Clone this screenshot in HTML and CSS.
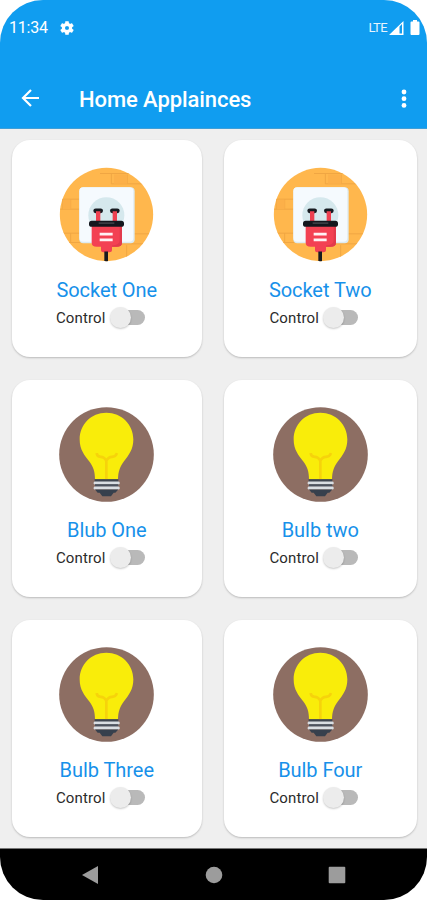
FILE: index.html
```html
<!DOCTYPE html>
<html lang="en">
<head>
<meta charset="utf-8">
<title>Home Applainces</title>
<link rel="stylesheet" href="styles.css">
</head>
<body>
<svg class="defs" aria-hidden="true">
  <symbol id="socket" viewBox="27 19.5 285 285">
    <clipPath id="disc"><circle cx="169.500" cy="162" r="140"/></clipPath>
    <g clip-path="url(#disc)">
      <rect x="20" y="10" width="300" height="300" fill="#ffb74d"/>
      <g fill="none" stroke="#f0a643" stroke-width="3">
        <path d="M184 38v32M232 42v28M150 39h100M184 70h96M30 116h64M38 116v30M62 116v30M30 146h64M62 218v28M30 218h62M50 246h76M230 254v40M250 220h60M210 250h70"/>
      </g>
      <path d="M192 42h40v28h-40zM38 118h24v28h-24z" fill="#fcb049"/>
      <rect x="88" y="80" width="166" height="168" rx="12" fill="#dcebf0"/>
      <rect x="88" y="80" width="162" height="164" rx="12" fill="#f5fafe"/>
      <circle cx="169" cy="164" r="54" fill="#d5e8ed"/>
      <rect x="130" y="144" width="29" height="14" rx="7" fill="#171a20"/>
      <rect x="180" y="144" width="29" height="14" rx="7" fill="#171a20"/>
      <path d="M138 152h13v36h-13zM188 152h13v36h-13z" fill="#ee4050"/>
      <path d="M125 192h91v54q0 13-16 13h-14v10q0 6-8 6h-18q-7 0-7-6v-10h-13q-15 0-15-13z" fill="#f34153"/>
      <path d="M209 194h7v52q0 13-16 13h-14v-4q23-2 23-15z" fill="#e23a4c"/>
      <rect x="117" y="181" width="105" height="18" rx="8" fill="#14171e"/>
      <path d="M146 188h47" stroke="#3b3d43" stroke-width="5"/>
      <path d="M149 221h39M149 238h39" stroke="#fff2f4" stroke-width="8"/>
      <rect x="163" y="273" width="11" height="32" fill="#171a20"/>
    </g>
  </symbol>
  <symbol id="bulb" viewBox="27 19.500 285 285">
    <circle cx="169.500" cy="162" r="142" fill="#8d6e63"/>
    <path d="M169 37C123 37 89 73 89 117c0 31 15 48 29 66 12 16 17 31 17 54h69c0-24 6-39 18-55 14-18 28-35 28-65 0-44-35-80-81-80z" fill="#f9ed0a"/>
    <path d="M169 237v-58M140 158q1 11 12 11 11 0 17 12 6-12 17-12 11 0 15-11" fill="none" stroke="#f6d30b" stroke-width="8"/>
    <path d="M134 236h71v9h-71z" fill="#3f4651"/>
    <rect x="131" y="243" width="78" height="9" rx="4" fill="#d9dee3"/>
    <path d="M135 251h70v8h-70z" fill="#4b535f"/>
    <rect x="131" y="258" width="78" height="9" rx="4" fill="#d9dee3"/>
    <path d="M135 267h70l-9 10h-5l-8 10h-26l-8-10h-6z" fill="#37404d"/>
  </symbol>
</svg>
<div class="phone">
  <header class="header">
    <div class="status">
      <span class="time">11:34</span>
      <svg class="gear" viewBox="2 2 20 20"><path fill="#fff" d="M19.140 12.940c.04-.3.060-.610.060-.940 0-.320-.020-.640-.070-.940l2.030-1.580a.49.49 0 0 0 .12-.610l-1.920-3.320a.488.488 0 0 0-.590-.220l-2.390.960c-.5-.380-1.030-.7-1.620-.940l-.360-2.540a.484.484 0 0 0-.480-.410h-3.840c-.240 0-.430.170-.470.410l-.360 2.540c-.590.240-1.130.570-1.620.940l-2.390-.960c-.220-.080-.470 0-.590.220L2.740 8.870c-.120.210-.080.470.120.610l2.030 1.580c-.050.3-.090.630-.090.940s.020.640.070.940l-2.030 1.580a.49.49 0 0 0-.120.610l1.920 3.320c.120.220.370.290.590.220l2.390-.960c.5.380 1.030.7 1.620.940l.360 2.540c.050.240.240.410.480.410h3.840c.240 0 .440-.170.470-.410l.360-2.540c.590-.240 1.130-.560 1.620-.940l2.390.960c.220.080.470 0 .590-.220l1.920-3.320c.120-.220.070-.470-.120-.610zM12 15a3 3 0 1 1 0-6 3 3 0 0 1 0 6z"/></svg>
      <span class="lte">LTE</span>
      <svg class="signal" viewBox="0 0 15 14"><path fill="#fff" fill-rule="evenodd" d="M14.500 0v14H0zM10.500 5.500V12.500H13V3z"/></svg>
      <svg class="battery" viewBox="0 0 10 15"><path fill="#fff" d="M3 0h4v1.500h1.500q1 0 1 1V14q0 1-1 1h-7q-1 0-1-1V2.500q0-1 1-1H3z"/></svg>
    </div>
    <div class="toolbar">
      <svg class="back" viewBox="0 0 18 18"><path fill="none" stroke="#fff" stroke-width="2.200" d="M17.500 9H1.500M9.500 1L1.500 9l8 8"/></svg>
      <h1>Home Applainces</h1>
      <svg class="more" viewBox="0 0 6 20"><g fill="#fff"><circle cx="3" cy="3" r="2.400"/><circle cx="3" cy="9.700" r="2.400"/><circle cx="3" cy="16.400" r="2.400"/></g></svg>
    </div>
  </header>
  <main class="grid">
    <section class="card"><svg class="pic"><use href="#socket"/></svg><h2>Socket One</h2><div class="control"><span>Control</span><i class="switch"></i></div></section>
    <section class="card"><svg class="pic"><use href="#socket"/></svg><h2>Socket Two</h2><div class="control"><span>Control</span><i class="switch"></i></div></section>
    <section class="card"><svg class="pic"><use href="#bulb"/></svg><h2>Blub One</h2><div class="control"><span>Control</span><i class="switch"></i></div></section>
    <section class="card"><svg class="pic"><use href="#bulb"/></svg><h2>Bulb two</h2><div class="control"><span>Control</span><i class="switch"></i></div></section>
    <section class="card"><svg class="pic"><use href="#bulb"/></svg><h2>Bulb Three</h2><div class="control"><span>Control</span><i class="switch"></i></div></section>
    <section class="card"><svg class="pic"><use href="#bulb"/></svg><h2>Bulb Four</h2><div class="control"><span>Control</span><i class="switch"></i></div></section>
  </main>
  <nav class="nav">
    <svg viewBox="0 0 18 18"><path fill="#9c9c9c" d="M17 0v18L1 9z"/></svg>
    <svg viewBox="0 0 18 18"><circle cx="9" cy="9" r="8.300" fill="#9c9c9c"/></svg>
    <svg viewBox="0 0 18 18"><rect x=".7" y=".7" width="16.600" height="16.600" rx="1" fill="#9c9c9c"/></svg>
  </nav>
</div>
</body>
</html>
```
FILE: styles.css
```css
* { box-sizing: border-box; }
body { margin: 0; background: #fff; font-family: Roboto, sans-serif; }
.defs { position: absolute; width: 0; height: 0; }
.phone {
  width: 427px; height: 900px; display: flex; flex-direction: column;
  overflow: hidden; border-radius: 43px; background: #efefef;
}
.header { height: 129px; background: #109df0; color: #fff; border-bottom: 1px solid #3f9fd8; }
.status { height: 55px; display: flex; align-items: center; padding: 0 7px 0 9px; }
.time { font-size: 16px; width: 51px; letter-spacing: -.2px; }
.gear { width: 14px; height: 14px; stroke: #fff; stroke-width: .2px; }
.lte { font-size: 13px; letter-spacing: -.6px; margin-left: auto; margin-right: 2px; opacity: .9; }
.signal { width: 15px; height: 14px; margin-right: 6px; }
.battery { width: 10px; height: 15px; }
.toolbar { height: 73px; display: flex; align-items: center; padding: 16px 20px 0 21px; }
.back { width: 19px; height: 18px; margin-top: -4px; }
h1 { margin: 0 auto 0 39px; font-size: 22px; line-height: 26px; font-weight: 500; letter-spacing: -.08px; }
.more { width: 6px; height: 20px; margin-top: -2px; }
.grid {
  flex: 1; display: grid; grid-template-columns: 190.5px 192.500px;
  grid-auto-rows: 217px; gap: 23px 22px; padding: 11px 0 0 11.500px;
}
.card {
  display: flex; flex-direction: column; align-items: center; padding-top: 27px;
  background: #fff; border-radius: 18px; box-shadow: 0 1px 2px rgba(0, 0, 0, .22);
}
.pic { width: 95px; height: 95px; flex: none; }
h2 { margin: 15px 0 0; font-size: 20px; line-height: 26px; font-weight: 400; letter-spacing: -.05px; color: #1791ea; }
.control { display: flex; align-items: center; gap: 4px; height: 24px; margin: 3px 13px 0 0; font-size: 15px; letter-spacing: .15px; color: #2b2b2b; }
.switch { position: relative; width: 35px; height: 22px; }
.switch::before { content: ""; position: absolute; left: 8px; top: 3px; width: 27px; height: 15px; border-radius: 8px; background: #b9b9b9; }
.switch::after { content: ""; position: absolute; left: 0; top: 0; width: 21px; height: 21px; border-radius: 50%; background: #ececec; box-shadow: 0 1px 2px rgba(0, 0, 0, .22); }
.nav {
  height: 52px; background: #000; border-top: 1px solid #777; display: flex;
  justify-content: space-between; align-items: center; padding: 0 81px;
}
.nav svg { width: 18px; height: 18px; }
```
